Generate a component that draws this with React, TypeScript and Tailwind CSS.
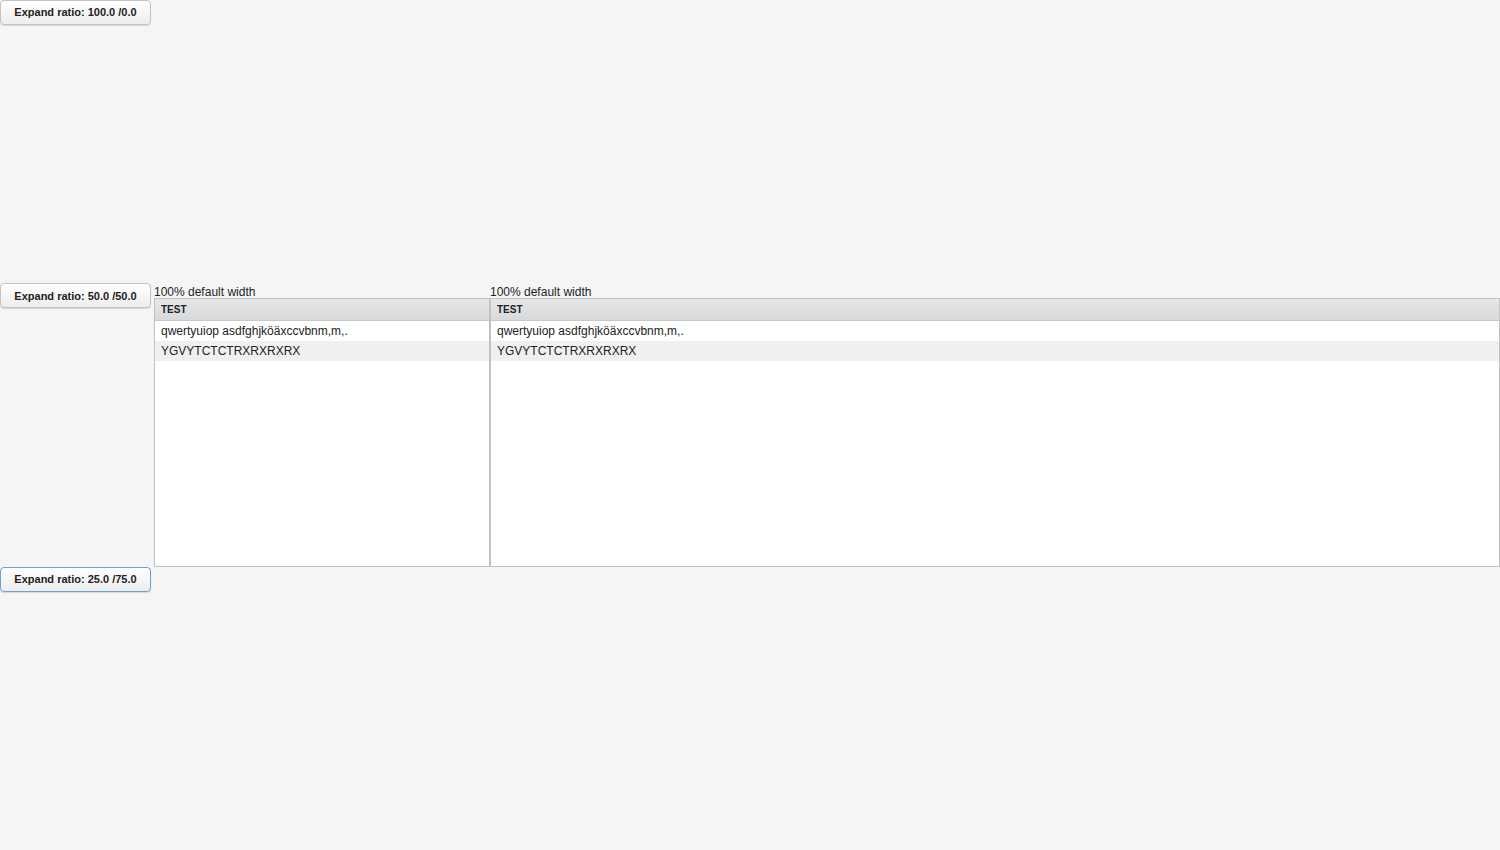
const rows = [
  "qwertyuiop asdfghjköäxccvbnm,m,.",
  "YGVYTCTCTRXRXRXRX",
];

function ExpandButton({ label, focused }: { label: string; focused?: boolean }) {
  return (
    <button
      className={
        "w-[151px] h-[25px] shrink-0 rounded-[4px] border bg-gradient-to-b from-white to-[#ededed] text-[11px] font-bold text-[#222] shadow-[0_1px_1px_rgba(0,0,0,0.12)] " +
        (focused ? "border-[#6d9fd4]" : "border-[#c3c3c3]")
      }
    >
      {label}
    </button>
  );
}

function TestTable({ className }: { className: string }) {
  return (
    <div className={"flex flex-col " + className}>
      <div className="h-[15px] pt-[2px] text-[12px] leading-[14px] text-[#222]">100% default width</div>
      <div className="flex-1 flex flex-col bg-white border border-[#c2c2c2]">
        <div className="h-[22px] shrink-0 flex items-center px-[6px] bg-gradient-to-b from-[#e6e7e8] to-[#d8d9da] border-b border-[#c8c8c8] text-[10px] font-bold text-[#222]">
          TEST
        </div>
        {rows.map((r, i) => (
          <div
            key={r}
            className={
              "h-[20px] flex items-center px-[6px] text-[12px] text-[#222] " +
              (i % 2 === 1 ? "bg-[#eff0f1]" : "bg-white")
            }
          >
            {r}
          </div>
        ))}
      </div>
    </div>
  );
}

export default function App() {
  return (
    <div
      className="h-[850px] w-[1500px] flex flex-col bg-[#f5f5f5] overflow-hidden"
      style={{ fontFamily: '"Liberation Sans", Arial, sans-serif' }}
    >
      <div className="flex-1 flex gap-[3px]">
        <ExpandButton label="Expand ratio: 100.0 /0.0" />
      </div>
      <div className="flex-1 flex gap-[3px]">
        <ExpandButton label="Expand ratio: 50.0 /50.0" />
        <div className="flex-1 flex">
          <TestTable className="w-[336px]" />
          <TestTable className="flex-1" />
        </div>
      </div>
      <div className="flex-1 flex gap-[3px]">
        <ExpandButton label="Expand ratio: 25.0 /75.0" focused />
      </div>
    </div>
  );
}
